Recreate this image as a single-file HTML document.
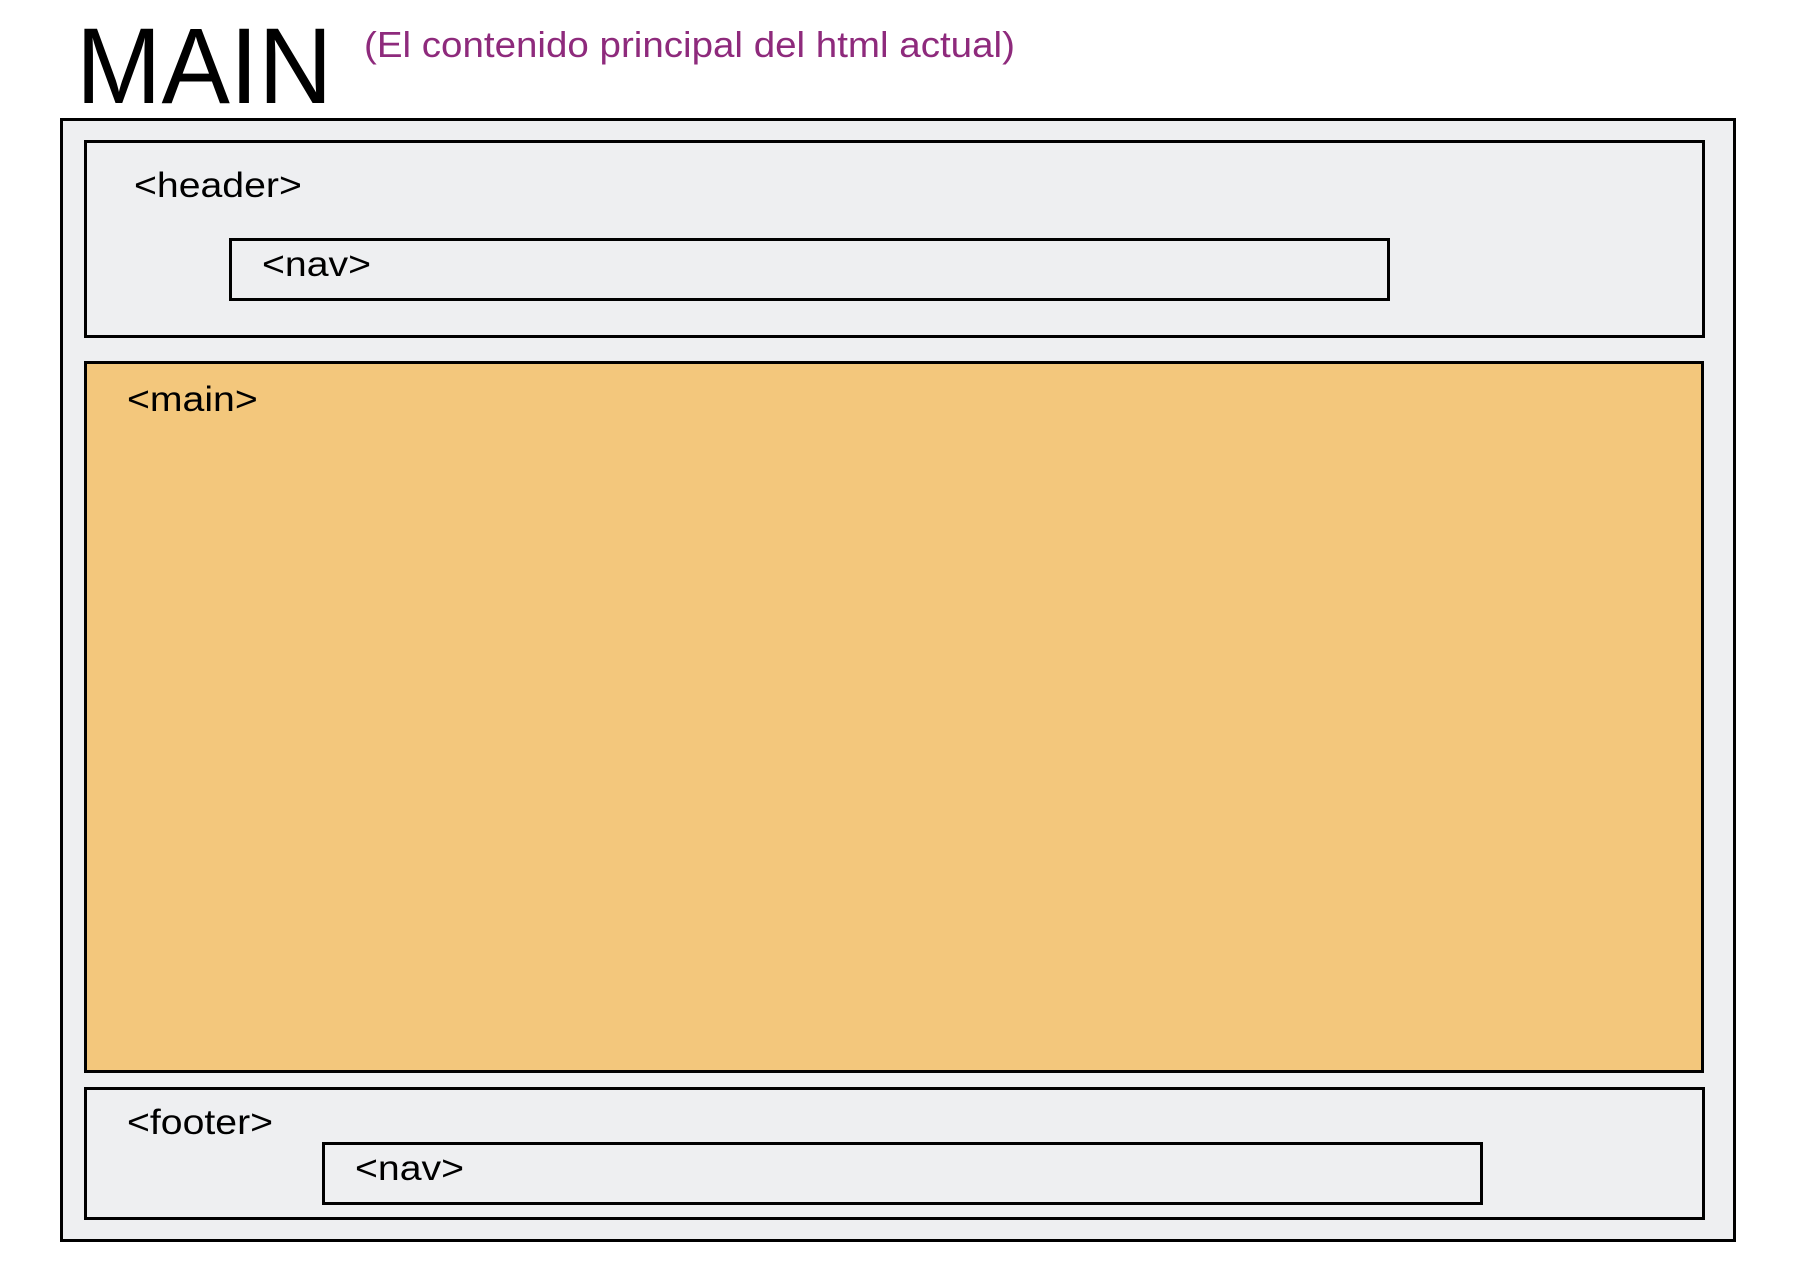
<!DOCTYPE html>
<html><head><style>
body{margin:0;width:1795px;height:1262px;background:#fff;position:relative;overflow:hidden;font-family:"Liberation Sans",sans-serif;}
.b{position:absolute;box-sizing:border-box;border:3.5px solid #000;background:#eeeff1;}
.t{position:absolute;white-space:nowrap;color:#000;font-size:35px;line-height:1;transform-origin:0 0;transform:scaleX(1.12);}
</style></head><body>
<div class="t" style="left:76px;top:12px;font-size:108px;transform:scaleX(0.95)">MAIN</div>
<div class="t" style="left:364px;top:27px;font-size:36px;color:#8e2a7c;transform:scaleX(1.07)">(El contenido principal del html actual)</div>
<div class="b" style="left:60px;top:118px;width:1676px;height:1124px"></div>
<div class="b" style="left:84px;top:140px;width:1621px;height:198px"></div>
<div class="t" style="left:134px;top:168px">&lt;header&gt;</div>
<div class="b" style="left:229px;top:238px;width:1161px;height:63px"></div>
<div class="t" style="left:262px;top:247px">&lt;nav&gt;</div>
<div class="b" style="left:84px;top:361px;width:1620px;height:712px;background:#f3c77c"></div>
<div class="t" style="left:127px;top:382px">&lt;main&gt;</div>
<div class="b" style="left:84px;top:1087px;width:1621px;height:133px"></div>
<div class="t" style="left:127px;top:1105px">&lt;footer&gt;</div>
<div class="b" style="left:322px;top:1142px;width:1161px;height:63px"></div>
<div class="t" style="left:355px;top:1151px">&lt;nav&gt;</div>
</body></html>
